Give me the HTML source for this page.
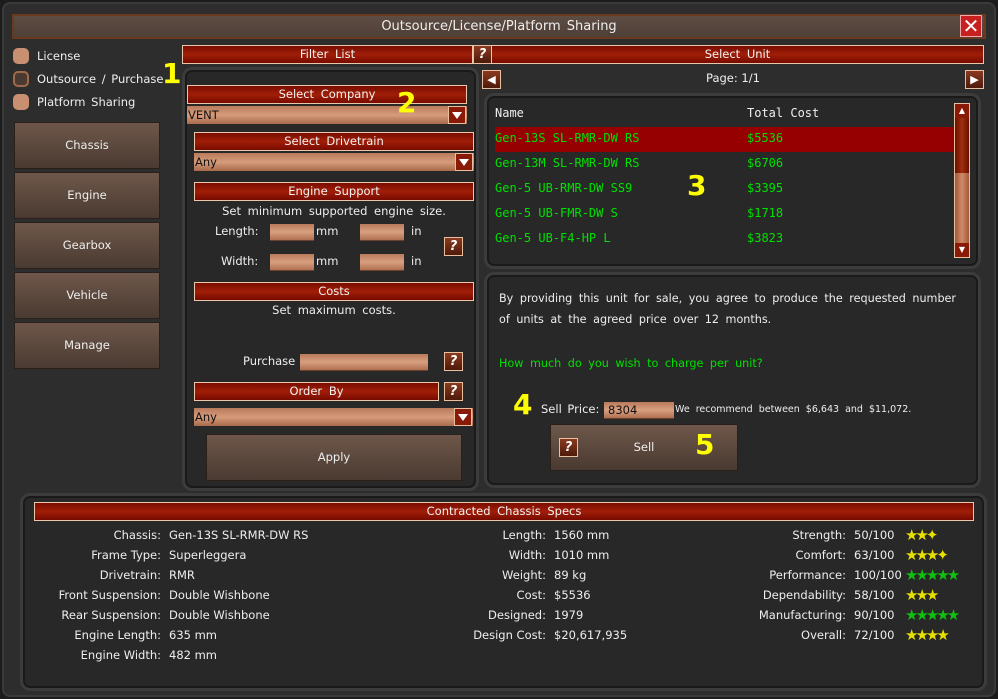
<!DOCTYPE html>
<html><head><meta charset="utf-8"><style>
*{margin:0;padding:0;box-sizing:border-box}
body{width:998px;height:699px;overflow:hidden;background:#1c1c1c;font-family:"DejaVu Sans","Liberation Sans",sans-serif;font-size:11.5px;color:#eee;position:relative}
.a{position:absolute}
#frame{left:2px;top:2px;width:994px;height:695px;border-radius:8px;background:#2d2d2d;border:2px solid #3a3a3a}
.title{left:12px;top:14px;width:974px;height:25px;background:linear-gradient(#5e4d43,#4e3f37);border:2px solid #6a3a20;text-align:center;line-height:21px;font-size:13px;color:#eee;word-spacing:2px}
.close{left:960px;top:15px;width:22px;height:22px;background:#c82020;border:1px solid #eaa;color:#fff;font-size:20px;line-height:20px;text-align:center}
.radio{width:16px;height:16px;border-radius:5px;background:#c89070;left:13px}
.lbl{left:37px;word-spacing:2px}
.nav{left:14px;width:146px;height:47px;background:linear-gradient(#6e574a,#4a3a31);border:1px solid #2a201a;text-align:center;line-height:45px}
.hdr{height:19px;background:linear-gradient(#7a0c00,#a01e08 50%,#780a00);border:1px solid #e8c8a8;text-align:center;line-height:17px;word-spacing:3px;color:#f4f4f4}
.q{width:19px;height:19px;background:linear-gradient(#8a3a20,#4e1a0a);border:1px solid #e8c0a0;color:#fff;font-weight:bold;font-style:italic;font-size:13px;text-align:center;line-height:17px}
.dd{height:18px;background:linear-gradient(#b87a5a,#d69c7c 50%,#a86a4a);color:#111;line-height:18px;padding-left:1px}
.dd i{position:absolute;right:1px;top:0;width:18px;height:18px;background:#8a1a08;border:1px solid #e8c0a0}
.dd i:after{content:"";position:absolute;left:3px;top:5px;border-left:5px solid transparent;border-right:5px solid transparent;border-top:7px solid #fff}
.in{height:17px;background:linear-gradient(#b87a5a,#d8a080 50%,#b07050);border-bottom:1px solid #6a4030}
.panel{background:#282828;border:3px solid #3c3c3c;border-radius:10px;box-shadow:inset 0 0 0 2px #1a1a1a}
.num{color:#ffff00;font-weight:bold;font-size:28px;font-family:"DejaVu Sans",sans-serif}
.btn{background:linear-gradient(#6e574a,#4a3a31);border:1px solid #2a201a;text-align:center}
.mono{font-family:"DejaVu Sans Mono","Liberation Mono",monospace;font-size:12px}
.g{color:#00e000}
.r{text-align:right}
.star{font-size:15px;letter-spacing:-3px}
.y{color:#e8e000}.gs{color:#10c010}
</style></head><body>
<div class="a" id="frame"></div>
<div class="a title">Outsource/License/Platform Sharing</div>
<div class="a close">✕</div>

<div class="a radio" style="top:48px"></div><div class="a lbl" style="top:49px">License</div>
<div class="a radio" style="top:71px;background:#4a3a32;border:2px solid #a06a4a"></div><div class="a lbl" style="top:72px">Outsource / Purchase</div>
<div class="a radio" style="top:94px"></div><div class="a lbl" style="top:95px">Platform Sharing</div>
<div class="a num" style="left:162px;top:57px">1</div>

<div class="a nav" style="top:122px">Chassis</div>
<div class="a nav" style="top:172px">Engine</div>
<div class="a nav" style="top:222px">Gearbox</div>
<div class="a nav" style="top:272px">Vehicle</div>
<div class="a nav" style="top:322px">Manage</div>

<div class="a hdr" style="left:182px;top:45px;width:291px">Filter List</div>
<div class="a q" style="left:473px;top:45px">?</div>
<div class="a hdr" style="left:491px;top:45px;width:493px">Select Unit</div>

<div class="a panel" style="left:182px;top:67px;width:297px;height:424px"></div>
<div class="a hdr" style="left:187px;top:85px;width:280px">Select Company</div>
<div class="a dd" style="left:187px;top:106px;width:280px">VENT<i></i></div>
<div class="a num" style="left:397px;top:86px">2</div>
<div class="a hdr" style="left:194px;top:132px;width:280px">Select Drivetrain</div>
<div class="a dd" style="left:194px;top:153px;width:280px">Any<i></i></div>
<div class="a hdr" style="left:194px;top:182px;width:280px">Engine Support</div>
<div class="a" style="left:194px;top:204px;width:280px;text-align:center;word-spacing:3px">Set minimum supported engine size.</div>
<div class="a" style="left:215px;top:224px">Length:</div>
<div class="a in" style="left:270px;top:224px;width:44px"></div><div class="a" style="left:316px;top:224px">mm</div>
<div class="a in" style="left:360px;top:224px;width:44px"></div><div class="a" style="left:411px;top:224px">in</div>
<div class="a" style="left:221px;top:254px">Width:</div>
<div class="a in" style="left:270px;top:254px;width:44px"></div><div class="a" style="left:316px;top:254px">mm</div>
<div class="a in" style="left:360px;top:254px;width:44px"></div><div class="a" style="left:411px;top:254px">in</div>
<div class="a q" style="left:444px;top:237px">?</div>
<div class="a hdr" style="left:194px;top:282px;width:280px">Costs</div>
<div class="a" style="left:194px;top:303px;width:280px;text-align:center;word-spacing:3px">Set maximum costs.</div>
<div class="a" style="left:243px;top:354px">Purchase</div>
<div class="a in" style="left:300px;top:354px;width:128px"></div>
<div class="a q" style="left:444px;top:352px">?</div>
<div class="a hdr" style="left:194px;top:382px;width:245px">Order By</div>
<div class="a q" style="left:444px;top:382px">?</div>
<div class="a dd" style="left:194px;top:408px;width:279px">Any<i></i></div>
<div class="a btn" style="left:206px;top:434px;width:256px;height:47px;line-height:45px">Apply</div>

<div class="a q" style="left:482px;top:70px;font-style:normal;font-size:11px">◀</div>
<div class="a" style="left:482px;top:71px;width:502px;text-align:center">Page: 1/1</div>
<div class="a q" style="left:965px;top:70px;font-style:normal;font-size:11px">▶</div>

<div class="a panel" style="left:484px;top:93px;width:497px;height:176px"></div>
<div class="a mono" style="left:495px;top:106px">Name</div>
<div class="a mono" style="left:747px;top:106px">Total Cost</div>
<div class="a" style="left:495px;top:127px;width:458px;height:25px;background:#960000"></div>
<div class="a mono g" style="left:495px;top:131px">Gen-13S SL-RMR-DW RS</div><div class="a mono g" style="left:747px;top:131px">$5536</div>
<div class="a mono g" style="left:495px;top:156px">Gen-13M SL-RMR-DW RS</div><div class="a mono g" style="left:747px;top:156px">$6706</div>
<div class="a mono g" style="left:495px;top:181px">Gen-5 UB-RMR-DW SS9</div><div class="a mono g" style="left:747px;top:181px">$3395</div>
<div class="a mono g" style="left:495px;top:206px">Gen-5 UB-FMR-DW S</div><div class="a mono g" style="left:747px;top:206px">$1718</div>
<div class="a mono g" style="left:495px;top:231px">Gen-5 UB-F4-HP L</div><div class="a mono g" style="left:747px;top:231px">$3823</div>
<div class="a num" style="left:687px;top:169px">3</div>
<div class="a" style="left:954px;top:103px;width:16px;height:155px;background:linear-gradient(90deg,#a05a3a,#d08a6a,#a05a3a);border:1px solid #e8c0a0"></div>
<div class="a" style="left:955px;top:118px;width:14px;height:55px;background:linear-gradient(90deg,#6a1000,#a03010,#6a1000)"></div>
<div class="a" style="left:955px;top:104px;width:14px;height:14px;background:#8a1a08;color:#fff;font-size:8px;text-align:center;line-height:14px">▲</div>
<div class="a" style="left:955px;top:243px;width:14px;height:14px;background:#8a1a08;color:#fff;font-size:8px;text-align:center;line-height:14px">▼</div>

<div class="a panel" style="left:484px;top:272px;width:497px;height:216px"></div>
<div class="a" style="left:499px;top:292px;word-spacing:3px;font-size:11.2px">By providing this unit for sale, you agree to produce the requested number</div>
<div class="a" style="left:499px;top:313px;word-spacing:3px;font-size:11.2px">of units at the agreed price over 12 months.</div>
<div class="a g" style="left:499px;top:357px;word-spacing:3px;font-size:11.2px">How much do you wish to charge per unit?</div>
<div class="a num" style="left:513px;top:388px">4</div>
<div class="a" style="left:541px;top:402px;word-spacing:2px">Sell Price:</div>
<div class="a in" style="left:604px;top:402px;width:70px;color:#111;padding-left:4px;line-height:16px">8304</div>
<div class="a" style="left:675px;top:404px;font-size:9.5px;word-spacing:3px">We recommend between $6,643 and $11,072.</div>
<div class="a btn" style="left:550px;top:424px;width:188px;height:47px;line-height:45px">Sell</div>
<div class="a q" style="left:559px;top:438px">?</div>
<div class="a num" style="left:695px;top:428px">5</div>

<div class="a panel" style="left:20px;top:493px;width:967px;height:198px"></div>
<div class="a hdr" style="left:34px;top:502px;width:940px">Contracted Chassis Specs</div>
<div class="a r" style="left:0;top:525px;width:161px;line-height:20px">Chassis:<br>Frame Type:<br>Drivetrain:<br>Front Suspension:<br>Rear Suspension:<br>Engine Length:<br>Engine Width:</div>
<div class="a" style="left:169px;top:525px;line-height:20px">Gen-13S SL-RMR-DW RS<br>Superleggera<br>RMR<br>Double Wishbone<br>Double Wishbone<br>635 mm<br>482 mm</div>
<div class="a r" style="left:400px;top:525px;width:146px;line-height:20px">Length:<br>Width:<br>Weight:<br>Cost:<br>Designed:<br>Design Cost:</div>
<div class="a" style="left:554px;top:525px;line-height:20px">1560 mm<br>1010 mm<br>89 kg<br>$5536<br>1979<br>$20,617,935</div>
<div class="a r" style="left:700px;top:525px;width:146px;line-height:20px">Strength:<br>Comfort:<br>Performance:<br>Dependability:<br>Manufacturing:<br>Overall:</div>
<div class="a" style="left:854px;top:525px;line-height:20px">50/100<br>63/100<br>100/100<br>58/100<br>90/100<br>72/100</div>
<div class="a star" style="left:905px;top:525px;line-height:20px"><span class="y">★★✦</span><br><span class="y">★★★✦</span><br><span class="gs">★★★★★</span><br><span class="y">★★★</span><br><span class="gs">★★★★★</span><br><span class="y">★★★★</span></div>
</body></html>
